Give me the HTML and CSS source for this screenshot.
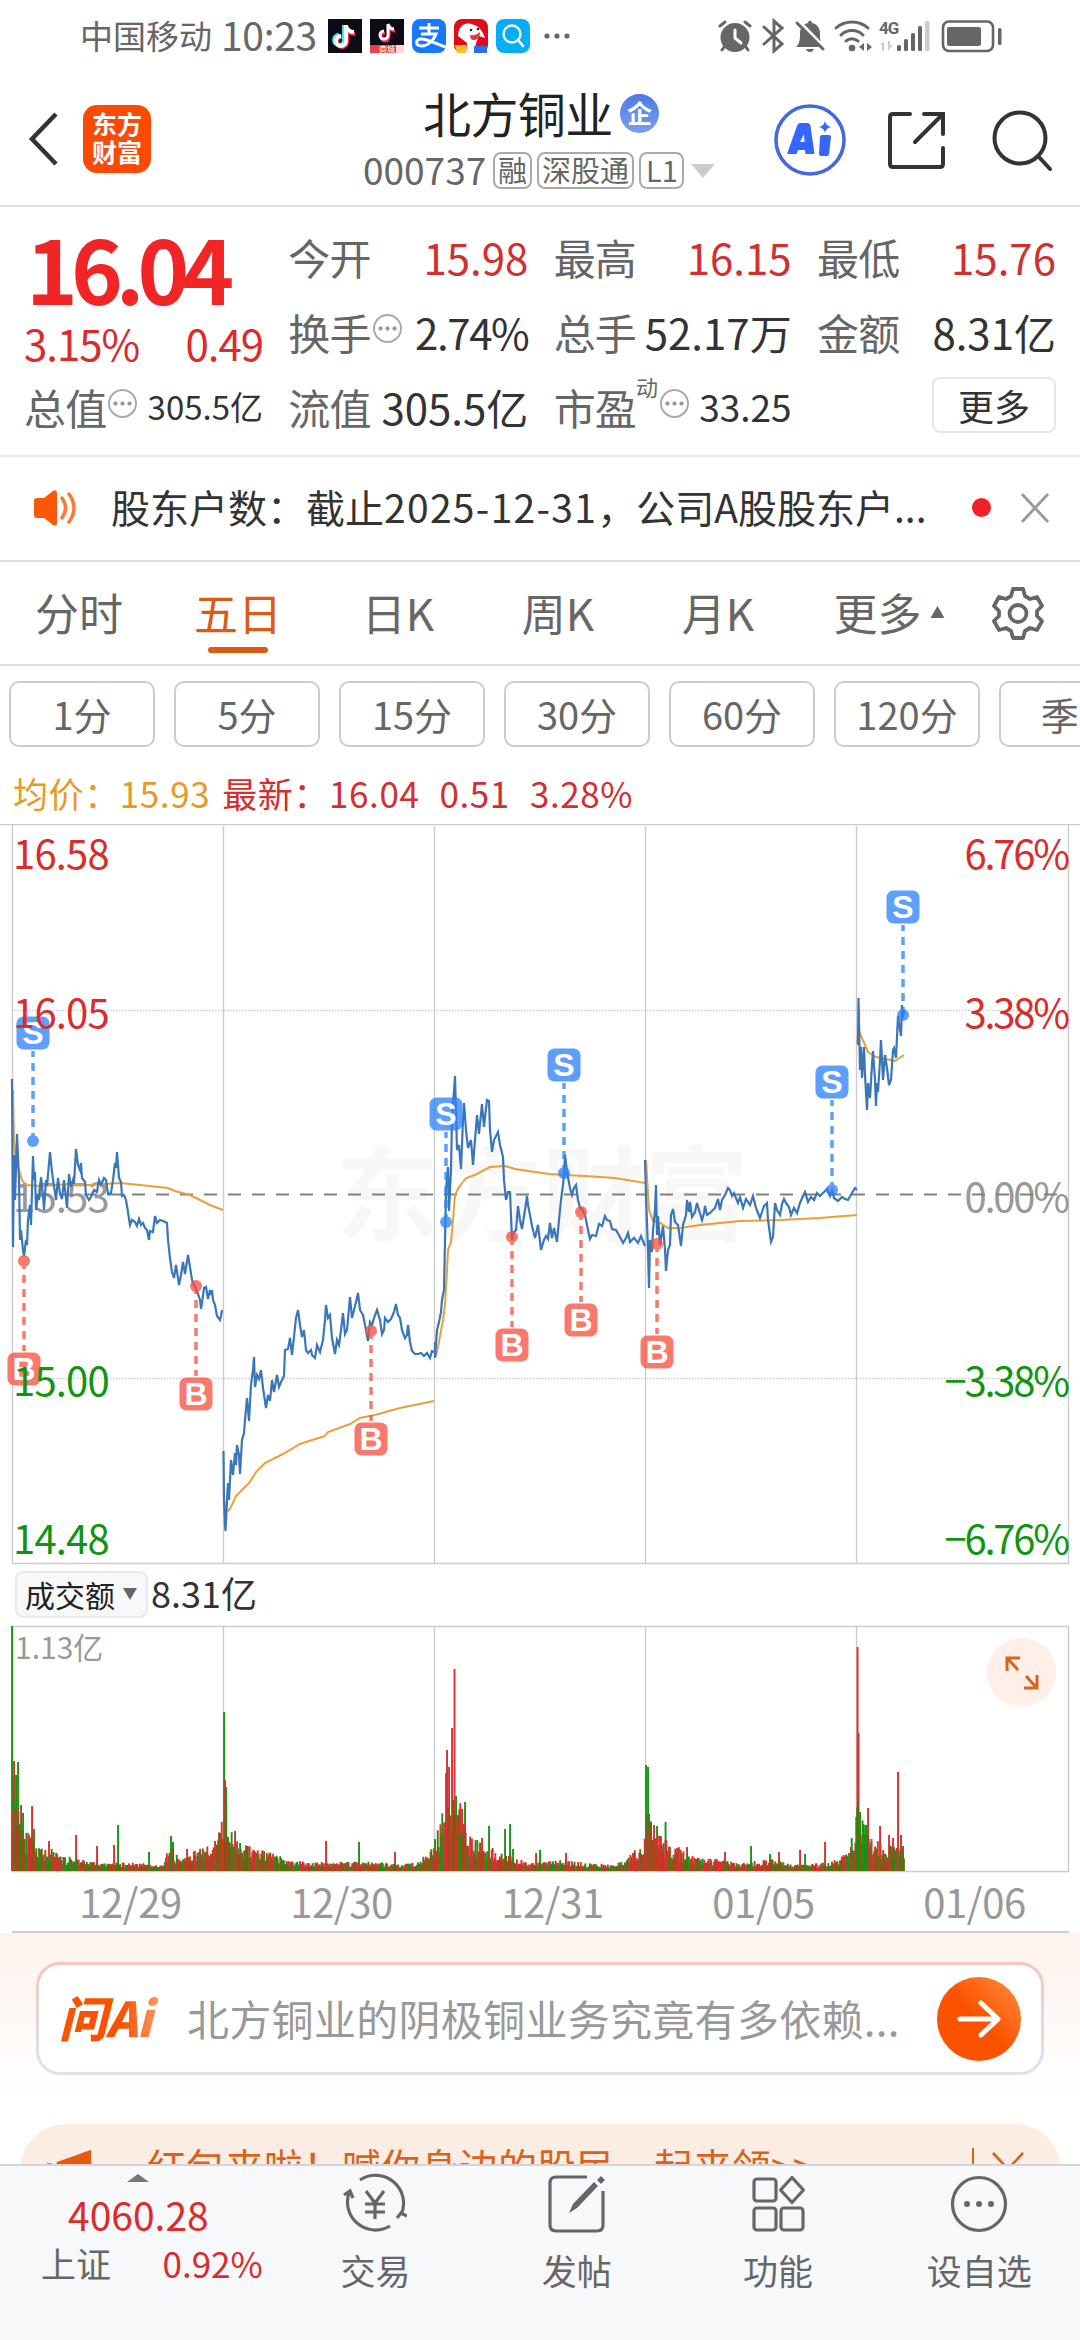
FILE: index.html
```html
<!DOCTYPE html>
<html lang="zh-CN">
<head>
    <meta charset="UTF-8">
    <meta name="viewport" content="width=device-width, initial-scale=1.0">
    <title>北方铜业 000737</title>
    <link rel="stylesheet" href="styles.css">
</head>
<body>
    <div class="status-bar">
        <span class="carrier">中国移动</span>
        <span class="clock">10:23</span>
        <div class="status-apps">
            <svg viewBox="0 0 34 34"><rect width="34" height="34" fill="#0d0b16"/><g fill="none" stroke-width="4"><path d="M17 7v15a5 5 0 1 1-5-5M17 8c1 4 4 6 8 6" stroke="#3ee" transform="translate(-1 -1)"/><path d="M18 7v15a5 5 0 1 1-5-5M18 8c1 4 4 6 8 6" stroke="#f25" transform="translate(1 1)"/><path d="M18 6v16a5 5 0 1 1-5-5M18 7c1 4 4 6 8 6" stroke="#fff"/></g></svg>
            <svg viewBox="0 0 34 34"><rect width="34" height="34" fill="#0d0b16"/><g fill="none" stroke-width="3"><path d="M18 6v11a4 4 0 1 1-4-4M18 6c1 3 3 5 6 5" stroke="#f25" transform="translate(1 1)"/><path d="M18 5v11a4 4 0 1 1-4-4M18 5c1 3 3 5 6 5" stroke="#fff"/></g><path d="M0 26h34v8H0z" fill="#e8404c"/><path d="M26 26h8v8h-8z" fill="#fbd9cc"/><text x="9" y="33" class="app-mini">商城</text></svg>
            <svg viewBox="0 0 34 34"><rect width="34" height="34" rx="8" fill="#1777fe"/><path d="M7 9h20M17 4v11M9 15h15c-2 6-8 12-14 12-7 0-7-7-1-7 7 0 15 5 25 8" fill="none" stroke="#fff" stroke-width="3"/></svg>
            <svg viewBox="0 0 34 34"><rect width="34" height="34" rx="8" fill="#e30b18"/><path d="M4 17C4 8 10 3 17 5c8 1 12 8 14 14l-6-2-3 7-2 10H12l1-10-5-4z" fill="#fff"/><path d="M16 16c5 1 7-1 10-3 0 6-3 8-6 8s-4-2-4-5z" fill="#e43b41"/><circle cx="17" cy="11" r="1.3" fill="#222"/><circle cx="24" cy="10" r="1.3" fill="#222"/><path d="M1 26h11v8H3z" fill="#ffc11a"/><path d="M20 27h13v7H20z" fill="#2a70e8"/></svg>
            <svg viewBox="0 0 34 34"><rect width="34" height="34" rx="8" fill="#06aef8"/><circle cx="16" cy="15" r="8.5" fill="none" stroke="#fff" stroke-width="2.4"/><path d="M22 21l5 6" stroke="#fff" stroke-width="2.6" stroke-linecap="round"/></svg>
        </div>
        <svg class="status-more" viewBox="0 0 26 6"><circle cx="3" cy="3" r="2.6"/><circle cx="13" cy="3" r="2.6"/><circle cx="23" cy="3" r="2.6"/></svg>
        <svg class="status-icons" viewBox="718 16 286 40">
            <g fill="#666">
                <circle cx="735" cy="37.5" r="14.5"/>
                <path d="M796 47c4-4 4-8 4-14 0-5 3-9 8-10 0-3 4-3 4 0 5 1 8 5 8 10 0 6 0 10 4 14zM806 49h8c-1 4-7 4-8 0z"/>
                <circle cx="852" cy="48" r="3.3"/>
                <path d="M859 47l5-4v8zM872 47l-5-4v8z"/>
                <rect x="897" y="45" width="4" height="6" rx="1.5"/>
                <rect x="904" y="39" width="4" height="12" rx="1.5"/>
                <rect x="911" y="33" width="4" height="18" rx="1.5"/>
                <rect x="918" y="26" width="4" height="25" rx="1.5"/>
                <rect x="925" y="21" width="4.5" height="30" rx="1.5" fill="#ccc"/>
                <path d="M880 45l4-4v10h-2v-6zM888 41v10l5-6h-3v-4z" fill="#ccc"/>
                <rect x="947" y="27" width="34" height="19" rx="2"/>
                <rect x="998" y="28" width="3.5" height="17" rx="1.5"/>
            </g>
            <g fill="none" stroke="#666" stroke-width="3" stroke-linecap="round">
                <path d="M720 26l5-4M750 26l-5-4M724 47l-2 3M746 47l2 3"/>
                <path d="M735 30v8l6 5" stroke="#fff"/>
                <path d="M764 27l18 17-8 7V21l8 7-18 16"/>
                <path d="M799 21l26 27" stroke="#fff" stroke-width="3"/>
                <path d="M797 23l26 26"/>
                <path d="M836 28c9-8 23-8 32 0M841 35c6-6 16-6 22 0M846 41c3-3 8-3 12 0"/>
                <rect x="943" y="21.5" width="50" height="29.5" rx="6" stroke-width="2.6"/>
            </g>
            <text x="879" y="34" class="net-type">4G</text>
        </svg>
    </div>

    <header class="header">
        <svg class="back" viewBox="0 0 32 56"><path d="M28 3L4 28l24 25" fill="none" stroke="#333" stroke-width="4.5"/></svg>
        <div class="brand"><span>东方</span><span>财富</span></div>
        <div class="stock">
            <div class="stock-name">北方铜业<i class="corp">企</i></div>
            <div class="stock-code">
                <span>000737</span>
                <span class="tag">融</span>
                <span class="tag">深股通</span>
                <span class="tag">L1</span>
                <svg class="caret" viewBox="0 0 24 14"><path d="M0 0h24L12 14z" fill="#ccc"/></svg>
            </div>
        </div>
        <div class="head-actions">
            <svg class="ai" viewBox="0 0 72 72"><circle cx="36" cy="36" r="34" fill="none" stroke="#4368e0" stroke-width="3.6"/><path fill="#3566fb" fill-rule="evenodd" d="M13 50l10-28q1-3 4-3h6q3 0 3.500 3l4 28h-9l-.5-4h-7l-1.500 4zM26 38h4.500l-.5-8zM48 31h7q2 0 2 2l-2 17q0 2-2 2h-6q-2 0-2-2l1-17q0-2 2-2zM51 17q1 5 6 6-5 1-6 6-1-5-6-6 5-1 6-6z"/></svg>
            <svg class="share" viewBox="0 0 60 60"><path d="M22 3H5q-3 0-3 3v47q0 3 3 3h47q3 0 3-3V37M36 3h19v20M55 3L27 31" fill="none" stroke="#333" stroke-width="4" stroke-linecap="round"/></svg>
            <svg class="search" viewBox="0 0 62 62"><circle cx="28" cy="28" r="25.5" fill="none" stroke="#333" stroke-width="4"/><path d="M46 46l12 13" stroke="#333" stroke-width="4" stroke-linecap="round"/></svg>
        </div>
    </header>

    <section class="quote">
        <div class="quote-col price-col">
            <div class="price">16.04</div>
            <div class="change"><span>3.15%</span><span>0.49</span></div>
            <div class="cell small"><label>总值</label><i class="tip"></i><b>305.5亿</b></div>
        </div>
        <div class="quote-col">
            <div class="cell up"><label>今开</label><b>15.98</b></div>
            <div class="cell pct"><label>换手</label><i class="tip"></i><b>2.74%</b></div>
            <div class="cell"><label>流值</label><b>305.5亿</b></div>
        </div>
        <div class="quote-col">
            <div class="cell up"><label>最高</label><b>16.15</b></div>
            <div class="cell"><label>总手</label><b>52.17万</b></div>
            <div class="cell mid"><label>市盈</label><sup>动</sup><i class="tip"></i><b>33.25</b></div>
        </div>
        <div class="quote-col">
            <div class="cell up"><label>最低</label><b>15.76</b></div>
            <div class="cell"><label>金额</label><b>8.31亿</b></div>
            <div class="cell"><button class="more-btn">更多</button></div>
        </div>
    </section>

    <section class="notice">
        <svg class="speaker" viewBox="0 0 44 38"><path d="M4 9h7L20 2q4-2 4 2v30q0 4-4 2l-9-7H4q-3 0-3-3V12q0-3 3-3z" fill="#fb5708"/><path d="M29 9q7 10 0 20M36 5q10 14 0 28" fill="none" stroke="#fb7a35" stroke-width="3.5" stroke-linecap="round"/></svg>
        <p>股东户数：截止<span class="date">2025-12-31</span>，公司A股股东户...</p>
        <i class="red-dot"></i>
        <svg class="close" viewBox="0 0 30 32"><path d="M2 2l26 28M28 2L2 30" stroke="#999" stroke-width="2.8"/></svg>
    </section>

    <nav class="tabs">
        <span>分时</span>
        <span class="active">五日</span>
        <span>日K</span>
        <span>周K</span>
        <span>月K</span>
        <span class="tab-more">更多<svg viewBox="0 0 14 12"><path d="M7 0l7 12H0z" fill="#666"/></svg></span>
        <svg class="gear" viewBox="0 0 54 54"><path d="M22 3h10l2 7 5 3 7-2 5 9-5 5v5l5 5-5 9-7-2-5 3-2 7H22l-2-7-5-3-7 2-5-9 5-5v-5l-5-5 5-9 7 2 5-3z" fill="none" stroke="#666" stroke-width="3.8" stroke-linejoin="round"/><circle cx="27" cy="27.5" r="8.5" fill="none" stroke="#666" stroke-width="3.8"/></svg>
    </nav>

    <div class="periods">
        <button>1分</button>
        <button>5分</button>
        <button>15分</button>
        <button>30分</button>
        <button>60分</button>
        <button>120分</button>
        <button>季K</button>
    </div>

    <div class="legend">
        <span class="avg">均价：15.93</span>
        <span>最新：16.04</span>
        <span>0.51</span>
        <span>3.28%</span>
    </div>

    <svg class="price-chart" viewBox="0 824 1080 742">
        <text class="watermark" x="336" y="1233">东方财富</text>
        <g class="grid">
            <path d="M0 824.500H1080M12.500 824.500V1563.500H1068.500V824.500M223.500 826V1563M434.500 826V1563M645.500 826V1563M856.500 826V1563"/>
            <path d="M14 1010.500H1068M14 1378.500H1068" stroke-dasharray="1.5 1.5"/>
        </g>
        <text class="axis flat" x="13" y="1212">15.53</text>
        <text class="axis flat end" x="1068" y="1212">0.00%</text>
        <path d="M12 1194.500H1068" class="zero"/>

        <g class="avg-line">
            <polyline points="13,1090 14,1140 16,1160 19,1170 22,1180 26,1185 40,1186 70,1184 90,1185 120,1183 140,1185 168,1188 175,1191 190,1195 210,1205 223,1210"/>
            <polyline points="224,1500 226,1512 229,1510 232,1505 236,1496 250,1482 256,1472 265,1463 283,1454 300,1444 325,1436 328,1432 350,1424 360,1418 375,1415 400,1408 434,1401"/>
            <polyline points="436,1356 439,1342 443,1320 445,1305 447,1270 448,1250 451,1242 453,1220 455,1195 459,1187 463,1182 466,1178 475,1175 490,1167 505,1166 515,1169 535,1172 550,1174 565,1175 585,1176 615,1178 645,1183"/>
            <polyline points="646,1160 649,1210 653,1221 660,1223 668,1228 680,1228 700,1225 740,1221 780,1220 820,1218 857,1215"/>
            <polyline points="857,1043 859,1031 862,1038 868,1052 876,1057 885,1059 895,1061 904,1055"/>
        </g>
        <g class="price-line">
            <polyline points="12,1079 13,1247 14,1155 15,1200 17,1134 19,1180 20,1240 21,1230 23,1250 24,1256 26,1240 27,1245 28,1220 30,1205 31,1225 33,1156 34,1180 35,1172 36,1210 38,1195 39,1200 41,1177 43,1195 44,1210 46,1180 47,1186 50,1152 52,1172 54,1186 56,1200 58,1178 60,1194 62,1199 64,1180 67,1208 69,1174 71,1187 73,1180 74,1184 76,1149 78,1165 80,1170 81,1163 82,1178 85,1182 86,1195 89,1200 91,1197 94,1190 97,1192 99,1180 101,1185 104,1178 106,1180 108,1194 111,1193 113,1180 115,1163 116,1168 117,1152 119,1178 121,1182 122,1196 124,1195 126,1200 128,1212 130,1225 132,1220 135,1222 137,1226 139,1219 141,1225 143,1223 145,1228 147,1230 149,1240 150,1231 153,1232 155,1216 157,1223 160,1220 163,1221 167,1223 168,1240 170,1258 172,1272 174,1278 176,1265 178,1278 179,1285 181,1275 183,1262 185,1274 188,1255 190,1267 192,1280 195,1287 198,1294 200,1300 201,1309 202,1303 204,1288 206,1287 208,1299 210,1290 211,1295 212,1290 213,1300 215,1305 217,1316 220,1320 222,1311 223,1311"/>
            <polyline points="223.500,1451 224,1500 225,1525 225.500,1531 227,1500 228,1483 229,1500 231,1460 233,1475 235,1453 236,1465 237,1445 239,1455 240,1474 242,1440 244,1433 245,1420 247,1398 249,1421 251,1385 253,1370 254,1357 255,1387 257,1375 259,1379 261,1370 263,1388 266,1408 268,1395 270,1401 272,1380 274,1392 277,1375 279,1387 281,1382 284,1376 285,1350 288,1349 290,1338 292,1355 294,1337 296,1318 298,1310 300,1325 302,1337 304,1330 306,1350 308,1353 311,1350 312,1355 315,1358 317,1345 320,1352 323,1340 325,1320 326,1305 328,1318 330,1315 332,1338 335,1354 337,1340 339,1345 341,1330 343,1313 345,1334 347,1330 350,1297 352,1318 354,1310 356,1302 358,1293 360,1310 363,1315 365,1325 368,1341 370,1322 372,1325 374,1318 377,1310 380,1320 382,1334 384,1330 385,1318 388,1322 391,1319 394,1312 396,1304 398,1315 400,1318 402,1330 405,1338 407,1335 408,1325 410,1342 412,1351 415,1354 418,1354 421,1353 424,1356 427,1353 430,1358 432,1351 434,1352"/>
            <polyline points="435,1342 435,1358 437,1330 439,1322 441,1312 442,1300 444,1290 445,1240 446,1190 448,1167 449,1211 451,1170 452,1120 455,1076 457,1150 459,1145 461,1169 463,1120 464,1103 466,1130 468,1148 471,1140 473,1165 475,1140 477,1115 479,1134 482,1104 484,1127 487,1100 489,1101 490,1130 492,1152 494,1140 498,1132 500,1145 503,1157 504,1180 506,1200 508,1192 510,1192 512,1240 514,1232 516,1230 518,1206 520,1220 522,1229 525,1210 527,1196 528,1205 530,1215 532,1226 535,1238 538,1225 541,1250 544,1240 546,1236 548,1239 550,1223 552,1238 554,1228 557,1242 559,1220 561,1200 563,1185 564,1175 565,1155 567,1172 570,1188 572,1195 574,1188 576,1185 578,1200 580,1208 582,1209 585,1215 588,1230 590,1239 592,1235 596,1236 599,1224 602,1226 605,1216 607,1220 610,1221 612,1229 616,1230 620,1237 623,1243 626,1238 628,1233 630,1242 634,1238 638,1243 641,1236 645,1246"/>
            <polyline points="645,1160 646,1195 648,1250 649,1288 650,1240 652,1252 653,1230 655,1210 656,1185 657,1235 658,1216 660,1245 663,1226 665,1250 666,1271 668,1250 670,1245 671,1215 673,1209 675,1222 678,1225 681,1246 683,1225 686,1215 687,1200 689,1212 690,1202 692,1217 695,1212 697,1203 699,1210 702,1220 704,1213 705,1206 707,1215 710,1213 715,1208 718,1199 720,1210 722,1200 725,1195 728,1188 730,1190 732,1196 734,1193 738,1203 740,1197 743,1208 746,1199 750,1205 753,1196 756,1208 760,1218 764,1206 767,1203 768,1220 771,1242 773,1237 775,1203 777,1210 780,1215 782,1204 784,1199 786,1203 789,1207 791,1215 794,1208 797,1213 800,1203 803,1196 805,1192 808,1202 811,1197 814,1200 817,1193 820,1196 824,1192 827,1189 830,1196 832,1190 834,1198 838,1201 842,1197 845,1199 848,1200 852,1193 855,1188 857,1190"/>
            <polyline points="858,1045 858.500,998 860,1070 861,1047 862,1078 864,1047 865,1075 867,1110 868,1083 870,1098 872,1065 873,1051 875,1080 876,1106 877,1083 878,1092 880,1060 881,1040 883,1080 885,1055 887,1068 889,1085 891,1080 893,1050 894,1048 896,1058 898,1016 901,1036 902,1005 903,1018 904,1010"/>
        </g>
        <g id="markers"></g>
        <text class="axis up" x="13" y="869">16.58</text>
        <text class="axis up" x="13" y="1028">16.05</text>
        <text class="axis down" x="13" y="1396">15.00</text>
        <text class="axis down" x="13" y="1554">14.48</text>
        <text class="axis up end" x="1068" y="869">6.76%</text>
        <text class="axis up end" x="1068" y="1028">3.38%</text>
        <text class="axis down end" x="1068" y="1396">−3.38%</text>
        <text class="axis down end" x="1068" y="1554">−6.76%</text>
    </svg>

    <div class="vol-head">
        <button class="vol-type">成交额<svg viewBox="0 0 14 12"><path d="M0 0h14L7 12z" fill="#666"/></svg></button>
        <span>8.31亿</span>
    </div>

    <div class="vol-wrap">
        <svg class="vol-chart" viewBox="0 1624 1080 250">
            <path class="grid" d="M12.500 1626.500H1068.500V1871.500H12.500zM223.500 1626V1871M434.500 1626V1871M645.500 1626V1871M856.500 1626V1871"/>
            <text class="vol-max" x="15" y="1659">1.13亿</text>
            <g id="volume"></g>
        </svg>
        <div class="expand">
            <svg viewBox="0 0 34 34"><path d="M2 15V2h13M3 3l10 11M32 19v13H19M31 31L21 20" fill="none" stroke="#d9631c" stroke-width="3"/></svg>
        </div>
    </div>

    <div class="dates">
        <span>12/29</span>
        <span>12/30</span>
        <span>12/31</span>
        <span>01/05</span>
        <span>01/06</span>
    </div>

    <section class="ask">
        <div class="ask-box">
            <span class="ask-logo">问Ai</span>
            <span class="ask-text">北方铜业的阴极铜业务究竟有多依赖...</span>
            <div class="ask-go">
                <svg viewBox="0 0 44 40"><path d="M3 20h37M24 4l17 16-17 16" fill="none" stroke="#fff" stroke-width="5" stroke-linecap="round" stroke-linejoin="round"/></svg>
            </div>
        </div>
    </section>

    <section class="banner">
        <svg class="horn" viewBox="0 0 50 40"><path d="M10 13L46 0v40L10 28zM0 14h5v14H0z" fill="#e55a0c"/></svg>
        <span class="banner-text">红包来啦！喊你身边的股民一起来领&gt;&gt;</span>
        <svg class="banner-close" viewBox="0 0 32 34"><path d="M1 1l30 32M31 1L1 33" stroke="#d9631c" stroke-width="2.6"/></svg>
    </section>

    <footer class="bottom-nav">
        <div class="index">
            <svg class="index-arrow" viewBox="0 0 22 8"><path d="M11 0l11 8H0z" fill="#777"/></svg>
            <div class="index-value">4060.28</div>
            <div class="index-row"><label>上证</label><span>0.92%</span></div>
        </div>
        <div class="nav-item">
            <svg viewBox="0 0 64 60"><g fill="none" stroke="#666" stroke-width="3.2"><path d="M17 7A28 28 0 0 1 58 42M47 53A28 28 0 0 1 6 20M1 22l6-4 3 7M54 45l4-5 6 3M23 18l9 12 9-12M32 30v16M22 31h20M22 39h20"/></g></svg>
            <span>交易</span>
        </div>
        <div class="nav-item">
            <svg viewBox="0 0 64 60"><path d="M42 4H11q-6 0-6 6v42q0 6 6 6h41q6 0 6-6V18" fill="none" stroke="#666" stroke-width="3.2"/><path d="M24 40l4-9L49 9l4 4-21 22zM52 7l4-4 4 4-4 4z" fill="#666"/></svg>
            <span>发帖</span>
        </div>
        <div class="nav-item">
            <svg viewBox="0 0 64 60"><g fill="none" stroke="#666" stroke-width="3.2"><rect x="8" y="6" width="22" height="22" rx="3"/><rect x="8" y="35" width="22" height="22" rx="3"/><rect x="35" y="35" width="22" height="22" rx="3"/><path d="M46 4.500l11.500 12.500L46 29.500 34.500 17z" stroke-linejoin="round"/></g></svg>
            <span>功能</span>
        </div>
        <div class="nav-item">
            <svg viewBox="0 0 64 60"><circle cx="32" cy="31" r="26.5" fill="none" stroke="#666" stroke-width="3.2"/><g fill="#666"><circle cx="20" cy="31" r="3"/><circle cx="32" cy="31" r="3"/><circle cx="44" cy="31" r="3"/></g></svg>
            <span>设自选</span>
        </div>
    </footer>
    <script src="script.js"></script>
</body>
</html>
```
FILE: styles.css
```css
body {
    width: 1080px;
    height: 2340px;
    margin: 0;
    position: relative;
    overflow: hidden;
    display: flex;
    flex-direction: column;
    background-color: #fff;
    color: #333;
    font-family: "Noto Sans CJK SC", "Noto Sans", sans-serif;
    line-height: 1;
}

body > * {
    box-sizing: border-box;
    flex-shrink: 0;
}

i, b, label {
    font-style: normal;
    font-weight: normal;
}

svg {
    display: block;
}

button {
    font-family: inherit;
    box-sizing: border-box;
    padding: 0;
    background: none;
    white-space: nowrap;
}

/* Status bar */
.status-bar {
    height: 74px;
    padding: 0 76px 2px 80px;
    display: flex;
    align-items: center;
    color: #666;
}

.carrier {
    font-size: 33px;
    margin-top: -2px;
}

.clock {
    width: 107px;
    margin: -3px 0 0 9px;
    font-size: 39px;
    letter-spacing: -0.3px;
}

.status-apps {
    display: flex;
    gap: 8px;
}

.status-apps svg {
    width: 34px;
    height: 34px;
}

.app-mini {
    font-size: 8px;
    fill: #fff;
}

.status-more {
    width: 26px;
    margin-left: 14px;
    fill: #666;
}

.status-icons {
    width: 286px;
    height: 40px;
    margin-left: auto;
}

.net-type {
    font: bold 17px "Roboto", sans-serif;
    fill: #666;
    letter-spacing: -1px;
}

/* Header */
.header {
    height: 133px;
    padding: 0 28px 2px;
    display: flex;
    align-items: center;
    border-bottom: 2px solid #ddd;
}

.back {
    width: 32px;
    height: 56px;
}

.brand {
    width: 68px;
    height: 68px;
    margin-left: 23px;
    border-radius: 14px;
    background-color: #fb4a06;
    color: #fff;
    font-size: 25px;
    font-weight: bold;
    display: flex;
    flex-direction: column;
    align-items: center;
    justify-content: center;
    gap: 3px;
    padding-bottom: 3px;
    box-sizing: border-box;
}

.stock {
    width: 360px;
    margin-left: 212px;
}

.stock-name {
    height: 64px;
    margin-top: -8px;
    padding-left: 60px;
    display: flex;
    align-items: center;
    font-size: 48px;
    letter-spacing: -0.6px;
    color: #222;
}

.corp {
    width: 39px;
    height: 39px;
    margin: 3px 0 0 7px;
    border-radius: 50%;
    background: linear-gradient(#4d7be3, #7a9fec);
    color: #fff;
    font-size: 25px;
    line-height: 36px;
    font-weight: bold;
    text-align: center;
}

.stock-code {
    margin-top: 8px;
    display: flex;
    align-items: center;
    font-size: 37px;
    color: #666;
}

.stock-code > span:first-child {
    width: 130px;
    margin-top: -3px;
}

.tag {
    height: 37px;
    margin-right: 5px;
    padding: 0 3px;
    box-sizing: border-box;
    border: 2px solid #aaa;
    border-radius: 8px;
    font-size: 29px;
    line-height: 30px;
    white-space: nowrap;
}

.tag:nth-child(4) {
    padding: 0 4px 0 5px;
}

.caret {
    width: 24px;
    margin-left: 2px;
}

.head-actions {
    margin-left: auto;
    display: flex;
    align-items: center;
    margin-right: -2px;
}

.ai {
    width: 72px;
    height: 72px;
    margin-top: 2px;
}

.share {
    width: 60px;
    height: 60px;
    margin: 4px 0 0 42px;
}

.search {
    width: 62px;
    height: 62px;
    margin: 4px 0 0 44px;
}

/* Quote */
.quote {
    height: 250px;
    padding: 12px 24px 0 24px;
    display: grid;
    grid-template-columns: 239px 240px 238px 239px;
    justify-content: space-between;
    border-bottom: 2px solid #eaeaea;
}

.cell {
    height: 75px;
    display: flex;
    align-items: center;
    font-size: 42px;
}

.cell label {
    color: #666;
    letter-spacing: -0.8px;
}

.cell b {
    margin-left: auto;
}

.up b {
    color: #d03030;
}

.pct b {
    letter-spacing: -1.4px;
}

.small b {
    font-size: 33px;
}

.mid b {
    font-size: 37px;
}

.cell sup {
    align-self: flex-start;
    margin-top: 6px;
    font-size: 22px;
    color: #666;
    vertical-align: baseline;
}

.tip {
    width: 29px;
    height: 29px;
    box-sizing: border-box;
    border: 2px solid #aaa;
    border-radius: 50%;
    background: radial-gradient(circle, #999 1.8px, transparent 2.4px) center / 7px 7px repeat-x;
    background-clip: content-box;
    padding: 0 2px;
    margin: -6px 0 0 2px;
}

.price {
    height: 97px;
    padding-left: 2px;
    font-size: 88px;
    line-height: 96px;
    font-weight: bold;
    letter-spacing: -7px;
    color: #f12525;
}

.change {
    height: 53px;
    display: flex;
    justify-content: space-between;
    align-items: center;
    font-size: 42px;
    letter-spacing: -1px;
    color: #d92c2c;
}

.more-btn {
    width: 124px;
    height: 56px;
    margin: -3px 0 0 auto;
    border: 2px solid #e6e6e6;
    border-radius: 8px;
    font-size: 36px;
    line-height: 46px;
    color: #333;
}

/* Notice */
.notice {
    height: 105px;
    padding: 0 30px 2px 33px;
    display: flex;
    align-items: center;
    border-bottom: 2px solid #ddd;
}

.speaker {
    width: 44px;
    height: 38px;
}

.notice p {
    width: 830px;
    margin: -2px 0 0 34px;
    font-size: 39px;
    white-space: nowrap;
}

.notice .date {
    letter-spacing: 1.3px;
}

.red-dot {
    width: 19px;
    height: 19px;
    margin-left: 31px;
    border-radius: 50%;
    background-color: #f22222;
}

.close {
    width: 30px;
    height: 32px;
    margin-left: auto;
}

/* Tabs */
.tabs {
    height: 104px;
    padding-bottom: 1px;
    display: grid;
    grid-template-columns: 158px repeat(4, 160px) 182px 76px;
    align-items: center;
    justify-items: center;
    border-bottom: 2px solid #ddd;
    font-size: 44px;
    color: #666;
}

.tabs span {
    margin-top: -1px;
}

.tabs .active {
    position: relative;
    color: #dc5a14;
}

.active::after {
    content: "";
    position: absolute;
    left: 14px;
    bottom: -19px;
    width: 60px;
    height: 6px;
    border-radius: 3px;
    background-color: #dc5a14;
}

.tab-more {
    display: flex;
    align-items: center;
}

.tab-more svg {
    width: 15px;
    margin-left: 8px;
}

.gear {
    width: 54px;
    height: 54px;
}

/* Periods */
.periods {
    height: 96px;
    padding: 15px 0 0 9px;
    display: flex;
    gap: 19px;
    overflow: hidden;
}

.periods button {
    flex: none;
    width: 146px;
    height: 66px;
    border: 2px solid #ccc;
    border-radius: 10px;
    font-size: 38px;
    line-height: 58px;
    color: #666;
}

.legend {
    height: 62px;
    padding: 0 0 2px 13px;
    display: flex;
    align-items: center;
    font-size: 35px;
    letter-spacing: 0.6px;
    color: #d03030;
}

.legend span {
    margin-right: 20px;
}

.legend .avg {
    margin-right: 12px;
    color: #e69a28;
}

/* Price chart */
.price-chart {
    width: 1080px;
    height: 742px;
}

.grid {
    fill: none;
    stroke: #ccc;
    stroke-width: 1.4;
}

.watermark {
    font-size: 103px;
    font-weight: bold;
    fill: #f7f7f7;
}

.zero {
    stroke: #808080;
    stroke-width: 2;
    stroke-dasharray: 13 11;
}

.axis {
    font-size: 40px;
    letter-spacing: -0.8px;
}

.axis.end {
    text-anchor: end;
    letter-spacing: -2.2px;
}

.axis.up {
    fill: #d92c2c;
}

.axis.down {
    fill: #119511;
}

.axis.flat {
    fill: #999;
}

.avg-line {
    fill: none;
    stroke: #e8a03a;
    stroke-width: 2;
}

.price-line {
    fill: none;
    stroke: #3a76b8;
    stroke-width: 2.2;
}

.marker-s {
    fill: #2b82fb;
    stroke: #2b82fb;
}

.marker-b {
    fill: #f95040;
    stroke: #f95040;
}

.marker-s, .marker-b {
    opacity: 0.76;
    stroke-width: 0;
}

.marker-s path, .marker-b path {
    stroke-width: 3.5;
    stroke-dasharray: 8 6;
}

.marker-text {
    font: bold 32px "Liberation Sans", sans-serif;
    fill: #fff;
    text-anchor: middle;
}

/* Volume */
.vol-head {
    height: 58px;
    padding: 0 0 1px 15px;
    display: flex;
    align-items: center;
    font-size: 36px;
}

.vol-head span {
    margin: -5px 0 0 3px;
}

.vol-type {
    width: 133px;
    height: 47px;
    padding: 0 9px 2px 8px;
    display: flex;
    align-items: center;
    justify-content: space-between;
    border: 2px solid #e8eaee;
    border-radius: 8px;
    background-color: #f7f8fa;
    font-size: 30px;
    line-height: 38px;
    color: #222;
}

.vol-type svg {
    width: 14px;
}

.vol-wrap {
    position: relative;
}

.vol-chart {
    width: 1080px;
    height: 250px;
}

.vol-max {
    font-size: 30px;
    fill: #999;
}

.expand {
    position: absolute;
    top: 14px;
    right: 24px;
    width: 69px;
    height: 69px;
    border-radius: 50%;
    background-color: #fef0e8;
    display: flex;
    align-items: center;
    justify-content: center;
}

.expand svg {
    width: 34px;
    height: 34px;
}

.dates {
    height: 59px;
    margin: 0 11px 0 12px;
    padding: 0 0 3px 13px;
    display: grid;
    grid-template-columns: repeat(5, 211px);
    align-items: center;
    border-bottom: 2px solid #ccc;
    font-size: 40px;
    letter-spacing: -0.4px;
    color: #999;
    text-align: center;
}

/* Ask AI */
.ask {
    height: 191px;
    padding: 29px 36px 0;
    background: linear-gradient(#fef2ed, #fff 170px);
}

.ask-box {
    height: 113px;
    box-sizing: border-box;
    padding: 0 20px;
    display: flex;
    align-items: center;
    border: 3px solid transparent;
    border-radius: 24px;
    background: linear-gradient(#fff, #fff) padding-box, linear-gradient(#f6c6be, #dbe4f0) border-box;
}

.ask-logo {
    width: 128px;
    padding-bottom: 6px;
    box-sizing: border-box;
    font-size: 48px;
    font-weight: 900;
    font-style: italic;
    letter-spacing: -1px;
    background: linear-gradient(90deg, #fb5200 50%, #ff9a68 80%);
    background-clip: text;
    -webkit-background-clip: text;
    color: transparent;
}

.ask-text {
    margin-top: -2px;
    font-size: 42px;
    letter-spacing: 0.3px;
    color: #999;
    white-space: nowrap;
}

.ask-go {
    width: 84px;
    height: 84px;
    margin-left: auto;
    border-radius: 50%;
    background: linear-gradient(45deg, #fb5200 50%, #ff9240);
    display: flex;
    align-items: center;
    justify-content: center;
}

.ask-go svg {
    width: 44px;
}

/* Banner, partly under the bottom bar */
.banner {
    height: 92px;
    margin: 0 19px 0 20px;
    padding: 0 37px 2px 27px;
    display: flex;
    align-items: center;
    border-radius: 46px;
    background-color: #fcede4;
    font-size: 39px;
    color: #d9631c;
}

.horn {
    width: 48px;
    height: 40px;
}

.banner-text {
    width: 770px;
    margin: -7px 0 0 52px;
}

.banner-close {
    width: 32px;
    height: 34px;
    margin-left: auto;
    padding: 4px 0 4px 18px;
    border-left: 2px solid #d9631c;
}

/* Bottom bar */
.bottom-nav {
    position: absolute;
    left: 0;
    right: 0;
    bottom: 0;
    height: 176px;
    display: flex;
    border-top: 2px solid #d2d4d8;
    background-color: #f7f8fa;
    color: #666;
}

.index {
    width: 275px;
}

.index-arrow {
    width: 22px;
    margin: 8px 0 0 127px;
}

.index-value {
    margin: 13px 0 0 68px;
    font-size: 39px;
    color: #d92c2c;
}

.index-row {
    padding: 11px 12px 0 41px;
    display: flex;
    justify-content: space-between;
    font-size: 35px;
}

.index-row span {
    color: #d92c2c;
}

.nav-item {
    width: 201.5px;
    padding-top: 7px;
    display: flex;
    flex-direction: column;
    align-items: center;
    font-size: 35px;
}

.nav-item svg {
    width: 64px;
    height: 60px;
    margin-bottom: 19px;
}
```
FILE: script.js
```js
// buy / sell points: type, x, dot y
const points = [
    ['S', 33, 1141], ['S', 446, 1222], ['S', 564, 1173], ['S', 832, 1190], ['S', 903, 1015],
    ['B', 24, 1261], ['B', 196, 1286], ['B', 371, 1331], ['B', 512, 1237], ['B', 581, 1212], ['B', 657, 1244]
];

document.getElementById('markers').innerHTML = points.map(([type, x, y]) => {
    const dir = type === 'S' ? -1 : 1;
    const box = y + dir * 108;
    return `<g class="marker-${type.toLowerCase()}">
        <circle cx="${x}" cy="${y}" r="6"/>
        <path d="M${x} ${y}V${box - dir * 18}"/>
        <rect x="${x - 16.5}" y="${box - 16.5}" width="33" height="33" rx="7"/>
    </g><text class="marker-text" x="${x}" y="${box + 11}">${type}</text>`;
}).join('');

// usual bar height along the axis: x, height
const level = [
    [12, 85], [16, 70], [20, 55], [24, 34], [30, 28], [36, 18], [50, 18], [60, 12], [80, 10], [100, 6], [140, 7],
    [160, 4], [168, 16], [172, 20], [180, 8], [195, 16], [205, 19], [216, 20], [221, 38], [226, 55], [230, 32],
    [240, 24], [255, 18], [270, 15], [290, 8], [320, 7], [350, 8], [380, 7], [400, 5], [420, 9], [434, 24],
    [440, 36], [445, 62], [450, 62], [458, 58], [464, 42], [470, 28], [485, 22], [500, 15], [520, 9], [530, 6],
    [560, 9], [590, 6], [615, 5], [632, 14], [642, 22], [647, 46], [652, 38], [662, 26], [675, 22], [690, 12],
    [720, 9], [740, 6], [775, 10], [790, 5], [830, 7], [845, 13], [853, 28], [858, 54], [864, 38], [872, 26],
    [885, 20], [904, 20]
];

// single tall bars: x, height, colour (r or g)
const peaks = [
    [12, 245, 'g'], [14, 110, 'r'], [16, 96, 'g'], [18, 109, 'g'], [21, 66, 'r'], [23, 58, 'g'], [32, 65, 'r'], [34, 42, 'g'],
    [49, 30, 'r'], [76, 36, 'r'], [97, 25, 'r'], [114, 26, 'r'], [118, 46, 'g'], [149, 19, 'g'], [171, 35, 'g'], [173, 29, 'g'],
    [187, 22, 'r'], [215, 30, 'r'], [224, 159, 'g'], [225, 91, 'r'], [226, 84, 'g'], [235, 40, 'r'], [240, 28, 'g'], [326, 30, 'r'],
    [359, 29, 'g'], [395, 19, 'r'], [435, 32, 'g'], [446, 98, 'r'], [447, 121, 'r'], [449, 104, 'r'], [452, 143, 'r'],
    [454.5, 202, 'r'], [456, 75, 'g'], [462, 62, 'r'], [465, 69, 'g'], [482, 33, 'r'], [489, 45, 'g'], [505, 42, 'g'],
    [510, 47, 'g'], [513, 22, 'g'], [536, 18, 'r'], [540, 21, 'g'], [566, 18, 'r'], [646, 106, 'g'], [648, 104, 'g'],
    [649, 57, 'g'], [654, 46, 'r'], [657, 45, 'g'], [665.5, 49, 'g'], [687, 24, 'r'], [725, 19, 'r'], [751, 25, 'g'],
    [770, 17, 'g'], [779, 19, 'r'], [800, 21, 'r'], [805, 17, 'g'], [825, 29, 'r'], [857.5, 224, 'r'], [858.5, 138, 'r'],
    [860, 59, 'g'], [868, 63, 'r'], [866, 46, 'g'], [880, 45, 'r'], [889, 36, 'r'], [893, 33, 'r'], [898, 99, 'r'],
    [901, 36, 'r'], [903, 25, 'g']
];

const colors = { r: '#d93030', g: '#149614', m: '#84560f' };
let seed = 11;
const rand = () => (seed = (seed * 16807) % 2147483647) / 2147483647;

const bar = (x, h, c) => `<rect x="${x - 0.9}" y="${1871 - h}" width="1.9" height="${h}" fill="${colors[c]}"/>`;

let bars = peaks.map(p => bar(...p)).join('');
let k = 0;
for (let x = 12; x <= 904; x += 0.9) {
    while (level[k + 1] && level[k + 1][0] < x) k++;
    const [x0, h0] = level[k];
    const [x1, h1] = level[k + 1] || level[k];
    const base = x1 > x0 ? h0 + (h1 - h0) * (x - x0) / (x1 - x0) : h0;
    const h = Math.max(3, base * (0.5 + rand() * 0.8));
    const r = rand();
    bars += bar(x, h, r < 0.42 ? 'r' : r < 0.68 ? 'g' : 'm');
}
document.getElementById('volume').innerHTML = bars;
```
